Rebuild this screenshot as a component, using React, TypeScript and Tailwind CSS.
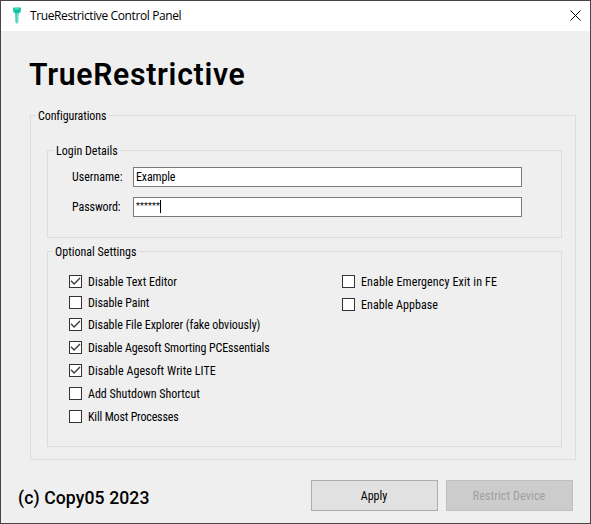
import type { ReactNode } from "react";

function Group({ title, titleClass, className, children }: { title: string; titleClass: string; className: string; children: ReactNode }) {
  return (
    <fieldset className={`border border-[#dcdcdc] ${className}`}>
      <legend className={`h-[15px] whitespace-nowrap leading-[17px] ${titleClass}`}>{title}</legend>
      {children}
    </fieldset>
  );
}

function Check({ label, checked = false, className = "", textClass = "" }: { label: string; checked?: boolean; className?: string; textClass?: string }) {
  return (
    <div className={`flex h-[13px] items-center ${className}`}>
      <span className="block size-[13px] shrink-0 border border-[#333] bg-white">
        {checked && (
          <svg width="11" height="11" viewBox="0 0 11 11" fill="none" stroke="#3c3c3c" strokeWidth="1.4" className="block">
            <path d="M1 4.8 4.1 7.9 10 2" />
          </svg>
        )}
      </span>
      <span className={`ml-[6px] mt-px whitespace-nowrap leading-[15px] ${textClass}`}>{label}</span>
    </div>
  );
}

export default function App() {
  return (
    <div className="flex h-[524px] w-[591px] flex-col overflow-hidden border border-[#4a4347] bg-[#efefef] font-[Roboto,sans-serif] text-[12px] font-[370] text-black [font-stretch:87.5%]">
      <header className="flex h-[30px] shrink-0 items-center bg-white pl-[11px] pr-[9px]">
        <svg width="10" height="18" viewBox="0 0 10 18" className="shrink-0">
          <path d="M1 1.5Q1 .4 2 .4H8Q9 .4 9 1.5L8.6 4.5Q8.3 6 7 6H3Q1.7 6 1.4 4.5Z" fill="#0fc4a2" />
          <path d="M3 1.2H7V2.4H3Z" fill="#62e3c8" />
          <path d="M3 6H7V8L6.4 9V10.5L7 11.5 6.4 12.5V13.5L6.8 14.5 6 16.5H4.2L3.4 15Z" fill="#7bdccb" />
          <path d="M3.4 6H4.8V15.5H3.8Z" fill="#3fcdb4" />
        </svg>
        <span className="ml-[8px] whitespace-nowrap font-['Open_Sans',sans-serif] text-[12px] font-normal tracking-[-0.38px] [font-stretch:100%]">TrueRestrictive Control Panel</span>
        <svg width="11" height="11" viewBox="0 0 11 11" stroke="#000" strokeWidth="1" className="-mt-px ml-auto">
          <path d="M.5.5 10.5 10.5M10.5.5.5 10.5" />
        </svg>
      </header>
      <h1 className="ml-[28px] mt-[23px] h-[40px] origin-left scale-x-[0.942] whitespace-nowrap text-[32px] font-[650] leading-[40px] tracking-[0.75px] [font-stretch:100%]">TrueRestrictive</h1>
      <Group title="Configurations" titleClass="-ml-[11px] px-[2px] tracking-[-0.1px]" className="ml-[29px] mt-[14px] h-[352px] w-[546px] shrink-0 pl-[16px]">
        <Group title="Login Details" titleClass="ml-[6px] px-[2px]" className="mt-[20px] h-[95px] w-[515px] pl-0">
          <div className="flex flex-col gap-[10px] pl-[24px] pt-[9px]">
            <div className="flex h-[20px] items-center">
              <span className="w-[61px]">Username:</span>
              <div className="h-[20px] w-[389px] border border-[#7a7a7a] bg-white pl-[2px] leading-[19px] tracking-[-0.15px]">Example</div>
            </div>
            <div className="flex h-[20px] items-center">
              <span className="w-[61px] tracking-[-0.1px]">Password:</span>
              <div className="flex h-[20px] w-[389px] border border-[#7a7a7a] bg-white pl-[2px]">
                <span className="w-[24px] text-[9px] leading-[16px] tracking-[0.12px]">******</span>
                <span className="mt-[2px] h-[13px] w-px bg-black" />
              </div>
            </div>
          </div>
        </Group>
        <Group title="Optional Settings" titleClass="ml-[5px] px-[2px]" className="mt-[6px] h-[203px] w-[515px]">
          <div className="flex pl-[21px] pt-[16px]">
            <div className="w-[273px]">
              <Check checked label="Disable Text Editor" textClass="tracking-[0.04px]" />
              <Check label="Disable Paint" className="mt-[8px] tracking-[-0.08px]" />
              <Check checked label="Disable File Explorer (fake obviously)" className="mt-[9px]" textClass="tracking-[-0.06px]" />
              <Check checked label="Disable Agesoft Smorting PCEssentials" className="mt-[10px]" textClass="tracking-[-0.12px]" />
              <Check checked label="Disable Agesoft Write LITE" className="mt-[10px]" textClass="tracking-[0.07px]" />
              <Check label="Add Shutdown Shortcut" className="mt-[10px]" />
              <Check label="Kill Most Processes" className="mt-[10px]" textClass="tracking-[-0.18px]" />
            </div>
            <div>
              <Check label="Enable Emergency Exit in FE" textClass="tracking-[0.12px]" />
              <Check label="Enable Appbase" className="mt-[10px]" textClass="tracking-[0.06px]" />
            </div>
          </div>
        </Group>
      </Group>
      <footer className="mt-[20px] flex h-[31px] items-center pl-[17px]">
        <span className="mt-[5px] w-[293px] origin-left scale-x-[0.927] whitespace-nowrap text-[19px] font-medium tracking-[0.1px] [font-stretch:100%]">(c) Copy05 2023</span>
        <button className="h-[31px] w-[127px] border border-[#adadad] bg-[#e1e1e1] pr-px pt-px">Apply</button>
        <button disabled className="ml-[8px] h-[31px] w-[127px] border border-[#bfbfbf] bg-[#cccccc] pr-px pt-px tracking-[0.13px] text-[#a0a0a0]">Restrict Device</button>
      </footer>
    </div>
  );
}
